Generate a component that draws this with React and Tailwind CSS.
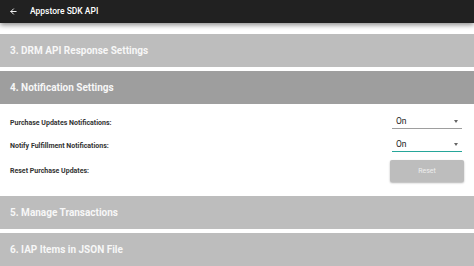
import React from 'react';
import { ArrowLeft } from 'lucide-react';

const SectionHeader = ({ title, dark }) => (
    <div className={`
        h-[33px]
        flex items-center
        px-[10px]
        ${dark ? 'bg-[#9e9e9e]' : 'bg-[#bdbdbd]'}
    `}>
        <span className="text-[10px] font-bold text-[#f7f7f7]">{title}</span>
    </div>
);

const Dropdown = ({ value, active }) => (
    <div className={`
        w-[70px] h-[15px] mr-[2px] mt-[1px] self-start
        flex items-center justify-between
        pl-[4px] pr-[4px]
        border-b
        ${active ? 'border-[#26a69a]' : 'border-[#9e9e9e]'}
    `}>
        <span className="text-[8.5px] text-[#222] leading-none">{value}</span>
        <span className="w-0 h-0 border-l-[2.5px] border-r-[2.5px] border-t-[3px] border-l-transparent border-r-transparent border-t-[#666]"></span>
    </div>
);

const Row = ({ label, children, className }) => (
    <div className={`flex items-center justify-between ${className}`}>
        <span className="text-[7px] font-bold text-[#333]">{label}</span>
        {children}
    </div>
);

export default function App() {
    return (
        <div className="w-[474px] h-[266px] overflow-hidden bg-white font-['Roboto',sans-serif]">
            <div className="
                relative z-10
                h-[23px]
                flex items-center
                bg-[#212121]
                shadow-[0_2px_5px_rgba(0,0,0,0.45)]
            ">
                <ArrowLeft size={9} strokeWidth={2.5} className="ml-[9px] text-white" />
                <span className="ml-[12px] text-[8.5px] font-medium text-white">Appstore SDK API</span>
            </div>

            <div className="flex flex-col pt-[11px]">
                <SectionHeader title="3. DRM API Response Settings" />
                <div className="mt-[4px]">
                    <SectionHeader title="4. Notification Settings" dark />
                    <div className="flex flex-col pt-[9px] pb-[14px] pl-[10px] pr-[10px]">
                        <Row label="Purchase Updates Notifications:" className="h-[20px]">
                            <Dropdown value="On" />
                        </Row>
                        <Row label="Notify Fulfillment Notifications:" className="h-[20px] mt-[3px]">
                            <Dropdown value="On" active />
                        </Row>
                        <Row label="Reset Purchase Updates:" className="h-[22px] mt-[4px]">
                            <button className="
                                w-[74px] h-[22px]
                                rounded-[2px]
                                bg-[#bdbdbd]
                                shadow-[0_1px_2px_rgba(0,0,0,0.3)]
                                text-[7px] text-[#eeeeee]
                            ">
                                Reset
                            </button>
                        </Row>
                    </div>
                </div>
                <SectionHeader title="5. Manage Transactions" />
                <div className="mt-[4px]">
                    <SectionHeader title="6. IAP Items in JSON File" />
                </div>
            </div>
        </div>
    );
}
